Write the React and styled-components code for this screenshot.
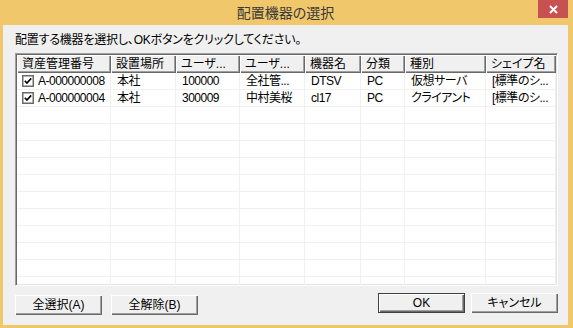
import React from 'react'
import styled, { createGlobalStyle } from 'styled-components'

const GlobalStyle = createGlobalStyle`
  html, body {
    margin: 0;
    padding: 0;
  }
  body {
    font-family: "Liberation Sans", "Noto Sans CJK JP", sans-serif;
    font-size: 12px;
    color: #000;
    font-feature-settings: "palt";
  }
`

const columns = [
  { title: '資産管理番号', width: 94 },
  { title: '設置場所', width: 65 },
  { title: 'ユーザ...', width: 64 },
  { title: 'ユーザ...', width: 65 },
  { title: '機器名', width: 56 },
  { title: '分類', width: 44 },
  { title: '種別', width: 81 },
  { title: 'シェイプ名', width: 70 },
]

const rows = [
  ['A-000000008', '本社', '100000', '全社管...', 'DTSV', 'PC', '仮想サーバ', '[標準のシ...'],
  ['A-000000004', '本社', '300009', '中村美桜', 'cl17', 'PC', 'クライアント', '[標準のシ...'],
]

const Frame = styled.div`
  width: 573px;
  height: 328px;
  box-sizing: border-box;
  padding: 0 5px 3px 3px;
  background: #f0c76b;
  display: flex;
  flex-direction: column;
`

const TitleBar = styled.div`
  height: 25px;
  display: grid;
  grid-template-columns: 1fr auto 1fr;
  align-items: start;
`

const Title = styled.div`
  grid-column: 2;
  font-size: 14px;
  line-height: 25px;
  color: #3a3a3a;
  font-family: "Noto Sans CJK JP", sans-serif;
`

const CloseButton = styled.div`
  grid-column: 3;
  justify-self: end;
  width: 30px;
  height: 18px;
  background: #c75050;
  display: flex;
  align-items: center;
  justify-content: center;
`

const Client = styled.div`
  flex: 1;
  background: #f0f0f0;
  padding: 8px 10px 10px 12px;
  display: flex;
  flex-direction: column;
`

const Prompt = styled.div`
  line-height: 14px;
  height: 14px;
  margin-bottom: 6px;
  letter-spacing: -0.2px;
`

const ListView = styled.div`
  height: 233px;
  box-sizing: border-box;
  background: #fff;
  border: 1px solid;
  border-color: #a0a0a0 #fff #fff #a0a0a0;
  box-shadow: inset 1px 1px #696969, inset -1px -1px #e3e3e3;
  padding: 1px;
  overflow: hidden;
  display: flex;
  flex-direction: column;
`

const HeaderRow = styled.div`
  display: flex;
  height: 18px;
  flex-shrink: 0;
`

const HeaderCell = styled.div`
  width: ${p => p.$w}px;
  box-sizing: border-box;
  background: #f0f0f0;
  box-shadow: inset 1px 1px #fff, inset -1px -1px #696969, inset -2px -2px #a0a0a0;
  padding-left: 5px;
  line-height: 18px;
  white-space: nowrap;
  overflow: hidden;
`

const Row = styled.div`
  display: flex;
  height: 17px;
  flex-shrink: 0;
`

const Cell = styled.div`
  width: ${p => p.$w}px;
  box-sizing: border-box;
  border-right: 1px solid #f0f0f0;
  border-bottom: 1px solid #f0f0f0;
  padding-left: ${p => (p.$first ? 5 : 6)}px;
  line-height: 16px;
  letter-spacing: -0.5px;
  white-space: nowrap;
  overflow: hidden;
  display: flex;
  align-items: center;
  gap: 4px;
`

const Check = styled.svg`
  width: 12px;
  height: 12px;
  flex-shrink: 0;
`

const ButtonBar = styled.div`
  margin-top: 7px;
  display: flex;
  align-items: flex-start;
  justify-content: space-between;
`

const Group = styled.div`
  display: flex;
  gap: ${p => p.$gap}px;
  margin-top: ${p => p.$offset || 0}px;
`

const Button = styled.div`
  width: 87px;
  height: 20px;
  box-sizing: border-box;
  background: #f0f0f0;
  display: flex;
  align-items: center;
  justify-content: center;
  line-height: 20px;
  box-shadow: ${p =>
    p.$default
      ? 'inset 0 0 0 1px #404040, inset 1px 1px 0 1px #fff, inset -1px -1px 0 1px #696969, inset -2px -2px 0 1px #a0a0a0'
      : 'inset 1px 1px #fff, inset -1px -1px #696969, inset -2px -2px #a0a0a0'};
`

function CheckBox() {
  return (
    <Check viewBox="0 0 12 12">
      <rect x="0.75" y="0.75" width="10.5" height="10.5" fill="#fff" stroke="#6b6b6b" strokeWidth="1.5" />
      <path d="M2.8 5.8 L4.9 8 L9.2 3.4" fill="none" stroke="#000" strokeWidth="1.6" />
    </Check>
  )
}

export default function App() {
  const empty = Array.from({ length: 11 })
  return (
    <>
      <GlobalStyle />
      <Frame>
        <TitleBar>
          <Title>配置機器の選択</Title>
          <CloseButton>
            <svg width="9" height="9" viewBox="0 0 9 9">
              <path d="M1 1 L8 8 M8 1 L1 8" stroke="#fff" strokeWidth="2" />
            </svg>
          </CloseButton>
        </TitleBar>
        <Client>
          <Prompt>配置する機器を選択し、OKボタンをクリックしてください。</Prompt>
          <ListView>
            <HeaderRow>
              {columns.map((c, i) => (
                <HeaderCell key={i} $w={c.width}>{c.title}</HeaderCell>
              ))}
            </HeaderRow>
            {rows.map((r, ri) => (
              <Row key={ri}>
                {r.map((v, ci) => (
                  <Cell key={ci} $w={columns[ci].width} $first={ci === 0}>
                    {ci === 0 && <CheckBox />}
                    {v}
                  </Cell>
                ))}
              </Row>
            ))}
            {empty.map((_, ri) => (
              <Row key={'e' + ri}>
                {columns.map((c, ci) => (
                  <Cell key={ci} $w={c.width} />
                ))}
              </Row>
            ))}
          </ListView>
          <ButtonBar>
            <Group $gap={9} $offset={2}>
              <Button>全選択(A)</Button>
              <Button>全解除(B)</Button>
            </Group>
            <Group $gap={6}>
              <Button $default>OK</Button>
              <Button>キャンセル</Button>
            </Group>
          </ButtonBar>
        </Client>
      </Frame>
    </>
  )
}
